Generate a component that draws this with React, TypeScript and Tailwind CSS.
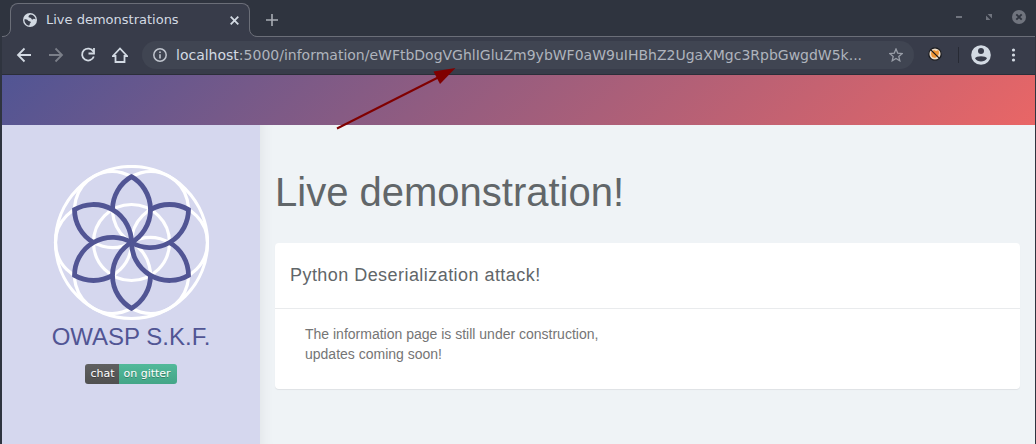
import React from "react";

const petals = [0, 60, 120, 180, 240, 300];

function FlowerLogo() {
  return (
    <svg className="size-39" viewBox="-78.500 -77.500 156 156" fill="none" role="img" aria-label="OWASP S.K.F. logo">
      <g stroke="#ffffff" strokeWidth="3.200">
        <circle r="76" />
        <circle r="38" />
        {petals.map((a) => (
          <circle key={a} cx="38" cy="0" r="38" transform={`rotate(${a})`} />
        ))}
      </g>
      <g stroke="#515594" strokeWidth="4.8" strokeLinejoin="miter">
        {petals.map((a) => (
          <path key={a} d="M-19 -32.9A38 38 0 0 1 0 -65.8A38 38 0 0 1 0 0" transform={`rotate(${a})`} />
        ))}
      </g>
    </svg>
  );
}

function Tab() {
  return (
    <div className="relative z-10 mt-[3px] flex h-[34px] w-[240px] items-center rounded-t-lg border border-b-0 border-[#6b6e78] bg-[#383c4a] pb-px pl-3 pr-[7px]">
      <svg className="absolute -left-2 bottom-0 h-2 w-2" viewBox="0 0 8 8">
        <path d="M8 0V8H0V7.5A7.500 7.500 0 0 0 7.500 0Z" fill="#383c4a" />
        <path d="M0 7.500A7.500 7.500 0 0 0 7.500 0" fill="none" stroke="#6b6e78" />
      </svg>
      <svg className="absolute -right-2 bottom-0 h-2 w-2" viewBox="0 0 8 8">
        <path d="M0 0V8H8V7.500A7.500 7.500 0 0 1 .5 0Z" fill="#383c4a" />
        <path d="M8 7.500A7.500 7.500 0 0 1 .5 0" fill="none" stroke="#6b6e78" />
      </svg>
      <svg className="size-[14px] shrink-0" viewBox="0 0 14 14">
        <circle cx="7" cy="7" r="7" fill="#d3dae3" />
        <path d="M7.600 1.500C6 2 5.300 3 5.600 4.200C6.500 4.800 8 4.300 8.300 5.600C8.500 6.700 9.600 6.800 10.300 6C11 5.500 12 6 12.600 6.600C12.500 4 10.500 1.800 7.600 1.500ZM1.400 6.400C1.300 9.500 3.500 12.200 6.200 12.600C7.200 11.800 6.200 11 7.200 10.300C8.300 9.600 7.700 8.400 6.500 8.300C5 8.200 5 6.600 3.600 6.500C2.700 6.500 2 6.300 1.400 6.400Z" fill="#383c4a" />
      </svg>
      <span className="ml-[9px] flex-1 whitespace-nowrap text-[13px] leading-4 text-[#d3dae3]">Live demonstrations</span>
      <button type="button" aria-label="Close tab" className="flex size-4 items-center justify-center text-[#d3dae3]">
        <svg className="size-[9px]" viewBox="0 0 9 9" stroke="currentColor" strokeWidth="1.8">
          <path d="M.7 .7L8.300 8.300M8.300 .7L.7 8.300" />
        </svg>
      </button>
    </div>
  );
}

function TabStrip() {
  return (
    <div className="flex h-[37px] border-b border-[#6b6e78] bg-[#2f343f] pl-2 pr-[9px]">
      <Tab />
      <button type="button" aria-label="New tab" className="ml-[15px] mt-[13px] flex size-[14px] items-center justify-center">
        <svg className="size-3" viewBox="0 0 12 12" stroke="#a9adb5" strokeWidth="1.600">
          <path d="M6 0V12M0 6H12" />
        </svg>
      </button>
      <div className="ml-auto mt-[10px] flex h-[14px] items-center gap-6">
        <button type="button" aria-label="Minimize" className="size-[6px]">
          <svg className="size-[6px]" viewBox="0 0 6 6"><path d="M0 2H6V4H0Z" fill="#70747e" /></svg>
        </button>
        <button type="button" aria-label="Restore" className="size-[6px]">
          <svg className="size-[6px]" viewBox="0 0 6 6" fill="#70747e"><path d="M1.600 0H6V4.400ZM0 1.600L4.400 6H0Z" /></svg>
        </button>
        <button type="button" aria-label="Close window" className="-ml-1 size-[14px]">
          <svg className="size-[14px]" viewBox="0 0 14 14">
            <circle cx="7" cy="7" r="7" fill="#70747e" />
            <path d="M4.300 4.300L9.700 9.700M9.700 4.300L4.300 9.700" stroke="#2f343f" strokeWidth="1.900" />
          </svg>
        </button>
      </div>
    </div>
  );
}

function ToolbarIcon({ label, d, muted }: { label: string; d: string; muted?: boolean }) {
  return (
    <button type="button" aria-label={label} className={muted ? "text-[#7b7f89]" : "text-[#d3dae3]"}>
      <svg className="size-4" viewBox="0 0 16 16" fill="none" stroke="currentColor" strokeWidth="1.800">
        <path d={d} />
      </svg>
    </button>
  );
}

function Toolbar() {
  return (
    <div className="flex h-[38px] items-center border-b border-[#2b2e39] bg-[#383c4a] pb-px pl-[14px] pr-[14px]">
      <div className="flex h-4 gap-4">
        <ToolbarIcon label="Back" d="M15 8H2.500M8.500 1.500L2 8L8.500 14.500" />
        <ToolbarIcon label="Forward" muted d="M1 8H13.500M7.500 1.500L14 8L7.500 14.500" />
        <ToolbarIcon label="Reload" d="M13.300 4.500A6 6 0 1 0 13.800 9.500M14 1V6.500H8.500" />
        <ToolbarIcon label="Home" d="M1 9H3.500V15H12.500V9H15L8 1.500Z" />
      </div>
      <div className="ml-[14px] flex h-7 min-w-0 flex-1 items-center rounded-full bg-[#404552] pl-[11px] pr-[11px]">
        <svg className="size-[14px] shrink-0" viewBox="0 0 14 14" fill="none" stroke="#c0c5ce" strokeWidth="1.500">
          <circle cx="7" cy="7" r="6.200" />
          <path d="M7 6.200V10.500M7 3.500V5" strokeWidth="1.600" />
        </svg>
        <span className="ml-[9px] min-w-0 flex-1 whitespace-nowrap text-[14px] leading-5 text-[#afb4bd]">
          <span className="text-[#d3dae3]">localhost</span>:5000/information/eWFtbDogVGhlIGluZm9ybWF0aW9uIHBhZ2UgaXMgc3RpbGwgdW5k...
        </span>
        <button type="button" aria-label="Bookmark this page" className="shrink-0">
          <svg className="size-[14px]" viewBox="0 0 14 14" fill="none" stroke="#989da7" strokeWidth="1.300">
            <path d="M7 1L8.700 5.100L13.200 5.500L9.800 8.400L10.800 12.800L7 10.500L3.200 12.800L4.200 8.400L.8 5.500L5.300 5.100Z" />
          </svg>
        </button>
      </div>
      <button type="button" aria-label="Cookie extension" className="mb-[2px] ml-[14px]">
        <svg className="size-[14px]" viewBox="0 0 14 14">
          <circle cx="7" cy="7" r="6.200" fill="#ecdcc8" stroke="#17181c" strokeWidth="1.200" />
          <path d="M3.500 4.500L6 3L8 4L10.500 3L11 6L10 9L7 11L4 10L3 7Z" fill="#ef9535" />
          <path d="M2.600 2.600L11.400 11.400" stroke="#17181c" strokeWidth="1.300" />
        </svg>
      </button>
      <div className="ml-4 h-4 w-px bg-[#272a34]" />
      <button type="button" aria-label="Profile" className="ml-3">
        <svg className="size-5" viewBox="0 0 20 20">
          <circle cx="10" cy="10" r="9.800" fill="#d3dae3" />
          <circle cx="10" cy="6" r="3" fill="#383c4a" />
          <path d="M4 13.300C4.800 10.500 15.200 10.500 16 13.300C13.500 17.600 6.500 17.600 4 13.300Z" fill="#383c4a" />
        </svg>
      </button>
      <button type="button" aria-label="Menu" className="ml-4">
        <svg className="h-4 w-[14px]" viewBox="0 0 14 16" fill="#d3dae3">
          <circle cx="6.500" cy="3" r="1.600" /><circle cx="6.500" cy="8" r="1.600" /><circle cx="6.500" cy="13" r="1.600" />
        </svg>
      </button>
    </div>
  );
}

export default function App() {
  return (
    <div className="relative flex min-h-screen flex-col border-l-2 border-r border-[#2f343f] bg-[#eff3f6] font-['DejaVu_Sans',sans-serif]">
      <TabStrip />
      <Toolbar />
      <header className="h-[50px] bg-[linear-gradient(135deg,#515594,#e96666)]" />
      <div className="flex flex-1 font-['Liberation_Sans',sans-serif]">
        <aside className="flex w-[258px] shrink-0 flex-col items-center bg-[#d5d7ee] pt-10">
          <FlowerLogo />
          <div className="text-2xl leading-8 text-[#515594]">OWASP S.K.F.</div>
          <a href="#chat" className="mt-[11px] flex h-5 overflow-hidden rounded-[3px] font-['DejaVu_Sans',sans-serif] text-[11px] leading-5 text-white [text-shadow:0_1px_0_rgba(1,1,1,0.3)]">
            <span className="bg-linear-to-b from-[#606060] to-[#505050] px-[5px]">chat</span>
            <span className="bg-linear-to-b from-[#52b99a] to-[#43a587] pl-1 pr-[6px]">on gitter</span>
          </a>
        </aside>
        <main className="min-w-0 flex-1 px-[15px] pt-10 shadow-[inset_15px_0_15px_-15px_rgba(0,0,0,0.08)]">
          <h1 className="text-[40px] leading-[54px] text-[#616669]">Live demonstration!</h1>
          <section className="mt-6 rounded bg-white shadow-[0_1px_1px_rgba(0,0,0,0.07)]">
            <h2 className="border-b border-[#e9ebed] px-[15px] py-5 text-[18px] leading-[25px] tracking-wide text-[#616669]">Python Deserialization attack!</h2>
            <p className="px-[30px] pb-[25px] pt-[15px] text-sm leading-5 text-[#757575]">
              The information page is still under construction,<br />updates coming soon!
            </p>
          </section>
        </main>
      </div>
      <svg className="pointer-events-none absolute left-[334px] top-[67px] h-[63px] w-[122px]" viewBox="336 67 122 63" aria-hidden="true">
        <path d="M337 128.500L440 76.500" stroke="#800000" strokeWidth="2" />
        <path d="M455.500 68L433.500 71.500L440 84Z" fill="#800000" />
      </svg>
    </div>
  );
}
